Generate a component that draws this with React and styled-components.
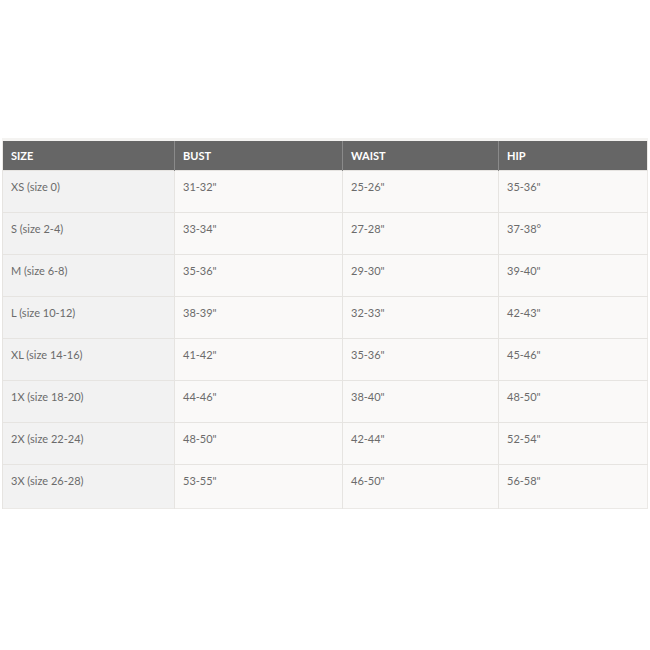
import React from 'react';
import styled, { createGlobalStyle } from 'styled-components';

const GlobalStyle = createGlobalStyle`
  body {
    margin: 0;
    background: #fff;
    font-family: Lato, "Open Sans", sans-serif;
  }
`;

const Page = styled.div`
  width: 650px;
  height: 650px;
  padding: 138px 2px 0 2px;
  box-sizing: border-box;
`;

const Table = styled.table`
  width: 646px;
  border-collapse: collapse;
  table-layout: fixed;
  border: 1px solid #ebe9e6;
  border-top: 3px solid #f4f3f1;
`;

const HeadCell = styled.th`
  height: 31px;
  padding: 0 8px;
  box-sizing: border-box;
  background: #666666;
  color: #fff;
  font-size: 11px;
  font-weight: 700;
  text-align: left;
  border-left: 1px solid #8a8a8a;
  &:first-child {
    border-left: none;
  }
`;

const Cell = styled.td`
  height: 42px;
  padding: 9px 8px 0;
  box-sizing: border-box;
  vertical-align: top;
  font-size: 11px;
  color: #6b6b6b;
  background: ${(p) => (p.$label ? '#f2f2f2' : '#faf9f8')};
  border-top: 1px solid #e6e4e1;
  border-left: 1px solid #e6e4e1;
`;

const LastCell = styled(Cell)`
  height: 44px;
`;

const sizes = [
  ['XS (size 0)', '31-32"', '25-26"', '35-36"'],
  ['S (size 2-4)', '33-34"', '27-28"', '37-38°'],
  ['M (size 6-8)', '35-36"', '29-30"', '39-40"'],
  ['L (size 10-12)', '38-39"', '32-33"', '42-43"'],
  ['XL (size 14-16)', '41-42"', '35-36"', '45-46"'],
  ['1X (size 18-20)', '44-46"', '38-40"', '48-50"'],
  ['2X (size 22-24)', '48-50"', '42-44"', '52-54"'],
  ['3X (size 26-28)', '53-55"', '46-50"', '56-58"'],
];

export default function App() {
  return (
    <Page>
      <GlobalStyle />
      <Table>
        <colgroup>
          <col style={{ width: 172 }} />
          <col style={{ width: 168 }} />
          <col style={{ width: 156 }} />
          <col />
        </colgroup>
        <thead>
          <tr>
            <HeadCell>SIZE</HeadCell>
            <HeadCell>BUST</HeadCell>
            <HeadCell>WAIST</HeadCell>
            <HeadCell>HIP</HeadCell>
          </tr>
        </thead>
        <tbody>
          {sizes.map((row, r) => {
            const C = r === sizes.length - 1 ? LastCell : Cell;
            return (
              <tr key={row[0]}>
                {row.map((v, i) => (
                  <C key={i} $label={i === 0}>{v}</C>
                ))}
              </tr>
            );
          })}
        </tbody>
      </Table>
    </Page>
  );
}
